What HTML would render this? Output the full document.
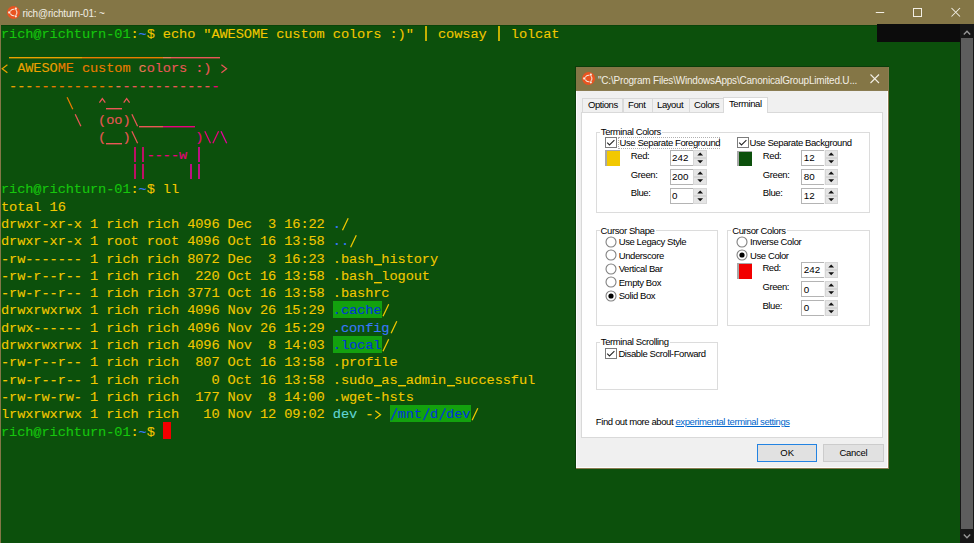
<!DOCTYPE html>
<html><head><meta charset="utf-8"><style>
*{margin:0;padding:0;box-sizing:border-box}
html,body{width:974px;height:543px;overflow:hidden;background:#0C500C;position:relative}
.ln{position:absolute;left:1.0px;height:17.3px;line-height:17.3px;white-space:pre;font-family:"Liberation Mono",monospace;font-size:13.7px;letter-spacing:-0.1213px;color:#F2C800;-webkit-text-stroke:0.1px}
.bgc{position:absolute;height:17.3px}
.us{position:relative;top:1px}
.sl{position:absolute;left:0;stroke-width:1.25;fill:none}
.ubar{position:absolute;height:1px}
.bar{position:absolute;width:2px;height:14.5px;opacity:0.8}
#title{position:absolute;left:0;top:0;width:974px;height:26px;background:#847646;border-bottom:1px solid #0a440a}
#lb{position:absolute;left:0;top:24px;width:1px;height:519px;background:#847646}
.dt{position:absolute;font-family:"Liberation Sans",sans-serif;white-space:pre;line-height:1.15}
#ttext{position:absolute;left:22.5px;top:5px;font-family:"Liberation Sans",sans-serif;font-size:11.5px;color:#f4f0e6;white-space:pre}
</style></head><body>
<div id="title"></div>
<div id="lb"></div>
<svg style="position:absolute;left:5.6px;top:4.5px" width="16" height="16" viewBox="0 0 16 16"><circle cx="7.60" cy="7.50" r="6.50" fill="#E95420"/><circle cx="7.60" cy="7.50" r="3.30" fill="none" stroke="#f3ece0" stroke-width="1.05"/><circle cx="3.20" cy="7.50" r="1.75" fill="#E95420"/><circle cx="9.80" cy="3.69" r="1.75" fill="#E95420"/><circle cx="9.80" cy="11.31" r="1.75" fill="#E95420"/><circle cx="3.20" cy="7.50" r="1.15" fill="#f3ece0"/><circle cx="9.80" cy="3.69" r="1.15" fill="#f3ece0"/><circle cx="9.80" cy="11.31" r="1.15" fill="#f3ece0"/></svg>
<div class="dt" style="left:22.5px;top:7.95px;font-size:10px;letter-spacing:-0.17px;color:#f2eee4">rich@richturn-01: ~</div>
<div class="bar" style="left:425px;top:26.00px;background:#F2C800"></div><div class="bar" style="left:498px;top:26.00px;background:#F2C800"></div><div class="ln" style="top:25.60px"><span style="color:#16C60C">rich@richturn-01</span><span style="color:#F2C800">:</span><span style="color:#3B78FF">~</span><span style="color:#F2C800">$ </span><span style="color:#F2C800">echo &quot;AWESOME custom colors :)&quot;   cowsay   lolcat</span></div>
<div class="ubar" style="left:9.10px;top:57px;width:72.90px;background:#eaa100;box-shadow:0 1px 0 rgba(234,161,0,0.4)"></div><div class="ubar" style="left:82.00px;top:57px;width:81.00px;background:#ea7c00;box-shadow:0 1px 0 rgba(234,124,0,0.4)"></div><div class="ubar" style="left:163.00px;top:57px;width:8.10px;background:#ea7c57;box-shadow:0 1px 0 rgba(234,124,87,0.4)"></div><div class="ubar" style="left:171.10px;top:57px;width:48.60px;background:#ea5757;box-shadow:0 1px 0 rgba(234,87,87,0.4)"></div><div class="ln" style="top:42.90px"><span style="color:#c5a100"> </span><span style="color:#eaa100">         </span><span style="color:#ea7c00">          </span><span style="color:#ea7c57"> </span><span style="color:#ea5757">      </span></div>
<svg class="sl" style="top:58.90px" width="974" height="18"><path d="M7.40 5.8 L2.20 9.75 L7.40 13.7" stroke="#eaa100"/><path d="M221.40 5.8 L226.60 9.75 L221.40 13.7" stroke="#ea5757"/></svg><div class="ln" style="top:60.20px"><span style="color:#eaa100">  AWESO</span><span style="color:#ea7c00">ME custom </span><span style="color:#ea7c57">c</span><span style="color:#ea5757">olors :)  </span></div>
<div class="ln" style="top:77.50px"><span style="color:#eaa100"> ---</span><span style="color:#ea7c00">----------</span><span style="color:#ea7c57">-</span><span style="color:#ea5757">-----------</span><span style="color:#ea007c">-</span></div>
<div class="ubar" style="left:106.30px;top:108px;width:16.20px;background:#ea5757;box-shadow:0 1px 0 rgba(234,87,87,0.4)"></div><svg class="sl" style="top:93.50px" width="974" height="18"><path d="M67.10 3.30 L72.80 15.30" stroke="#ea7c00"/><path d="M99.40 8.7 L102.35 4.6 L105.30 8.7" stroke="#ea5757"/><path d="M123.70 8.7 L126.65 4.6 L129.60 8.7" stroke="#ea5757"/></svg><div class="ln" style="top:94.80px"><span style="color:#eaa100"> </span><span style="color:#ea7c00">          </span><span style="color:#ea7c57"> </span><span style="color:#ea5757">    </span></div>
<div class="ubar" style="left:138.70px;top:126px;width:24.30px;background:#ea5757;box-shadow:0 1px 0 rgba(234,87,87,0.4)"></div><div class="ubar" style="left:163.00px;top:126px;width:32.40px;background:#ea007c;box-shadow:0 1px 0 rgba(234,0,124,0.4)"></div><svg class="sl" style="top:110.80px" width="974" height="18"><path d="M75.20 3.30 L80.90 15.30" stroke="#ea5757"/><path d="M131.90 3.30 L137.60 15.30" stroke="#ea5757"/></svg><div class="ln" style="top:112.10px"><span style="color:#ea7c00">        </span><span style="color:#ea7c57"> </span><span style="color:#ea5757">   (oo)    </span><span style="color:#ea007c">    </span></div>
<div class="ubar" style="left:106.30px;top:143px;width:16.20px;background:#ea5757;box-shadow:0 1px 0 rgba(234,87,87,0.4)"></div><svg class="sl" style="top:128.10px" width="974" height="18"><path d="M131.90 3.30 L137.60 15.30" stroke="#ea5757"/><path d="M204.80 3.30 L210.50 15.30" stroke="#ea007c"/><path d="M218.60 3.30 L212.90 15.30" stroke="#ea007c"/><path d="M221.00 3.30 L226.70 15.30" stroke="#ea00a1"/></svg><div class="ln" style="top:129.40px"><span style="color:#ea7c00">     </span><span style="color:#ea7c57"> </span><span style="color:#ea5757">      (  ) </span><span style="color:#ea007c">       )  </span><span style="color:#ea00a1"> </span></div>
<div class="bar" style="left:134px;top:147.10px;background:#ea007c"></div><div class="bar" style="left:142px;top:147.10px;background:#ea007c"></div><div class="bar" style="left:198px;top:147.10px;background:#ea00a1"></div><div class="ln" style="top:146.70px"><span style="color:#ea7c00">  </span><span style="color:#ea7c57"> </span><span style="color:#ea5757">           </span><span style="color:#ea007c">    ----w </span><span style="color:#ea00a1"> </span></div>
<div class="bar" style="left:134px;top:164.40px;background:#ea007c"></div><div class="bar" style="left:142px;top:164.40px;background:#ea007c"></div><div class="bar" style="left:190px;top:164.40px;background:#ea00a1"></div><div class="bar" style="left:198px;top:164.40px;background:#ea00a1"></div><div class="ln" style="top:164.00px"><span style="color:#ea5757">           </span><span style="color:#ea007c">          </span><span style="color:#ea00a1">    </span></div>
<div class="ln" style="top:181.30px"><span style="color:#16C60C">rich@richturn-01</span><span style="color:#F2C800">:</span><span style="color:#3B78FF">~</span><span style="color:#F2C800">$ </span><span style="color:#F2C800">ll</span></div>
<div class="ln" style="top:198.60px"><span style="color:#F2C800">total 16</span></div>
<svg class="sl" style="top:214.60px" width="974" height="18"><path d="M348.20 3.30 L342.50 15.30" stroke="#F2C800"/></svg><div class="ln" style="top:215.90px"><span style="color:#F2C800">drwxr-xr-x 1 rich rich 4096 Dec  3 16:22 </span><span style="color:#3B78FF">.</span><span style="color:#F2C800"> </span></div>
<svg class="sl" style="top:231.90px" width="974" height="18"><path d="M356.30 3.30 L350.60 15.30" stroke="#F2C800"/></svg><div class="ln" style="top:233.20px"><span style="color:#F2C800">drwxr-xr-x 1 root root 4096 Oct 16 13:58 </span><span style="color:#3B78FF">..</span><span style="color:#F2C800"> </span></div>
<div class="ubar" style="left:373.60px;top:264px;width:8.10px;background:#F2C800;box-shadow:0 1px 0 rgba(242,200,0,0.4)"></div><div class="ln" style="top:250.50px"><span style="color:#F2C800">-rw------- 1 rich rich 8072 Dec  3 16:23 </span><span style="color:#F2C800">.bash history</span></div>
<div class="ubar" style="left:373.60px;top:282px;width:8.10px;background:#F2C800;box-shadow:0 1px 0 rgba(242,200,0,0.4)"></div><div class="ln" style="top:267.80px"><span style="color:#F2C800">-rw-r--r-- 1 rich rich  220 Oct 16 13:58 </span><span style="color:#F2C800">.bash logout</span></div>
<div class="ln" style="top:285.10px"><span style="color:#F2C800">-rw-r--r-- 1 rich rich 3771 Oct 16 13:58 </span><span style="color:#F2C800">.bashrc</span></div>
<div class="bgc" style="left:333.10px;top:301.10px;width:48.60px;background:#13A10E"></div><svg class="sl" style="top:301.10px" width="974" height="18"><path d="M388.70 3.30 L383.00 15.30" stroke="#F2C800"/></svg><div class="ln" style="top:302.40px"><span style="color:#F2C800">drwxrwxrwx 1 rich rich 4096 Nov 26 15:29 </span><span style="color:#0037DA">.cache</span><span style="color:#F2C800"> </span></div>
<svg class="sl" style="top:318.40px" width="974" height="18"><path d="M396.80 3.30 L391.10 15.30" stroke="#F2C800"/></svg><div class="ln" style="top:319.70px"><span style="color:#F2C800">drwx------ 1 rich rich 4096 Nov 26 15:29 </span><span style="color:#3B78FF">.config</span><span style="color:#F2C800"> </span></div>
<div class="bgc" style="left:333.10px;top:335.70px;width:48.60px;background:#13A10E"></div><svg class="sl" style="top:335.70px" width="974" height="18"><path d="M388.70 3.30 L383.00 15.30" stroke="#F2C800"/></svg><div class="ln" style="top:337.00px"><span style="color:#F2C800">drwxrwxrwx 1 rich rich 4096 Nov  8 14:03 </span><span style="color:#0037DA">.local</span><span style="color:#F2C800"> </span></div>
<div class="ln" style="top:354.30px"><span style="color:#F2C800">-rw-r--r-- 1 rich rich  807 Oct 16 13:58 </span><span style="color:#F2C800">.profile</span></div>
<div class="ubar" style="left:373.60px;top:385px;width:8.10px;background:#F2C800;box-shadow:0 1px 0 rgba(242,200,0,0.4)"></div><div class="ubar" style="left:397.90px;top:385px;width:8.10px;background:#F2C800;box-shadow:0 1px 0 rgba(242,200,0,0.4)"></div><div class="ubar" style="left:446.50px;top:385px;width:8.10px;background:#F2C800;box-shadow:0 1px 0 rgba(242,200,0,0.4)"></div><div class="ln" style="top:371.60px"><span style="color:#F2C800">-rw-r--r-- 1 rich rich    0 Oct 16 13:58 </span><span style="color:#F2C800">.sudo as admin successful</span></div>
<div class="ln" style="top:388.90px"><span style="color:#F2C800">-rw-rw-rw- 1 rich rich  177 Nov  8 14:00 </span><span style="color:#F2C800">.wget-hsts</span></div>
<div class="bgc" style="left:389.80px;top:404.90px;width:81.00px;background:#13A10E"></div><svg class="sl" style="top:404.90px" width="974" height="18"><path d="M375.30 5.8 L380.50 9.75 L375.30 13.7" stroke="#F2C800"/><path d="M396.80 3.30 L391.10 15.30" stroke="#0037DA"/><path d="M429.20 3.30 L423.50 15.30" stroke="#0037DA"/><path d="M445.40 3.30 L439.70 15.30" stroke="#0037DA"/><path d="M477.80 3.30 L472.10 15.30" stroke="#F2C800"/></svg><div class="ln" style="top:406.20px"><span style="color:#F2C800">lrwxrwxrwx 1 rich rich   10 Nov 12 09:02 </span><span style="color:#61D6D6">dev</span><span style="color:#F2C800"> -  </span><span style="color:#0037DA"> mnt d dev</span><span style="color:#F2C800"> </span></div>
<div class="ln" style="top:423.50px"><span style="color:#16C60C">rich@richturn-01</span><span style="color:#F2C800">:</span><span style="color:#3B78FF">~</span><span style="color:#F2C800">$ </span></div>
<div class="bgc" style="left:163.00px;top:422.20px;width:8.10px;background:#F20000"></div>
<div style="position:absolute;left:877px;top:24.4px;width:83px;height:17.3px;background:#0c0c0c"></div>
<div style="position:absolute;left:960px;top:24.4px;width:14px;height:519px;background:#171717"></div>
<div style="position:absolute;left:961px;top:38px;width:12px;height:490.5px;background:#5d5d5d"></div>
<svg style="position:absolute;left:860px;top:0" width="114" height="25">
<path d="M15.8 12.5 H24.2" stroke="#f2eee4" stroke-width="1"/>
<rect x="53.5" y="8.5" width="8" height="8" fill="none" stroke="#f2eee4" stroke-width="1"/>
<path d="M91.5 8 L100 16.5 M100 8 L91.5 16.5" stroke="#f2eee4" stroke-width="1.05"/>
</svg>
<svg style="position:absolute;left:960px;top:24px" width="14" height="519">
<path d="M3.8 10.5 L7 7.2 L10.2 10.5" fill="none" stroke="#9a9a9a" stroke-width="1.3"/>
<path d="M3.8 510.5 L7 513.8 L10.2 510.5" fill="none" stroke="#9a9a9a" stroke-width="1.3"/>
</svg>
<div style="position:absolute;left:575.0px;top:66.0px;width:1.0px;height:403.0px;background:#0a3c0a"></div>
<div style="position:absolute;left:575.0px;top:66.0px;width:314.0px;height:1.0px;background:#0a3c0a"></div>
<div style="position:absolute;left:576.0px;top:67.0px;width:313.0px;height:402.0px;background:#8a7c52"></div>
<div style="position:absolute;left:576.0px;top:67.0px;width:312.0px;height:23.0px;background:#847646"></div>
<div style="position:absolute;left:576.0px;top:90.6px;width:312.0px;height:377.4px;background:#f0f0f0;border-left:1px solid #fbfbfb;border-right:1px solid #fdfdfd;border-bottom:1px solid #fdfdfd"></div>
<svg style="position:absolute;left:581px;top:71px" width="16" height="16" viewBox="0 0 16 16"><circle cx="7.60" cy="7.50" r="6.50" fill="#E95420"/><circle cx="7.60" cy="7.50" r="3.30" fill="none" stroke="#f3ece0" stroke-width="1.05"/><circle cx="3.20" cy="7.50" r="1.75" fill="#E95420"/><circle cx="9.80" cy="3.69" r="1.75" fill="#E95420"/><circle cx="9.80" cy="11.31" r="1.75" fill="#E95420"/><circle cx="3.20" cy="7.50" r="1.15" fill="#f3ece0"/><circle cx="9.80" cy="3.69" r="1.15" fill="#f3ece0"/><circle cx="9.80" cy="11.31" r="1.15" fill="#f3ece0"/></svg>
<div class="dt" style="left:598.0px;top:74.5px;font-size:10.00px;letter-spacing:-0.20px;color:#f2eee4;">"C:\Program Files\WindowsApps\CanonicalGroupLimited.U...</div>
<svg style="position:absolute;left:869px;top:73px" width="12" height="12"><path d="M1.5 1.5 L10 10 M10 1.5 L1.5 10" stroke="#f2eee4" stroke-width="1.1"/></svg>
<div style="position:absolute;left:582.4px;top:98.0px;width:41.1px;height:14.0px;background:#f0f0f0;border:1px solid #d9d9d9;border-bottom:none"></div>
<div class="dt" style="left:587.9px;top:99.5px;font-size:9.50px;letter-spacing:-0.40px;color:#000;">Options</div>
<div style="position:absolute;left:622.5px;top:98.0px;width:30.0px;height:14.0px;background:#f0f0f0;border:1px solid #d9d9d9;border-bottom:none"></div>
<div class="dt" style="left:628.0px;top:99.5px;font-size:9.50px;letter-spacing:-0.40px;color:#000;">Font</div>
<div style="position:absolute;left:651.5px;top:98.0px;width:38.1px;height:14.0px;background:#f0f0f0;border:1px solid #d9d9d9;border-bottom:none"></div>
<div class="dt" style="left:657.0px;top:99.5px;font-size:9.50px;letter-spacing:-0.40px;color:#000;">Layout</div>
<div style="position:absolute;left:688.6px;top:98.0px;width:35.0px;height:14.0px;background:#f0f0f0;border:1px solid #d9d9d9;border-bottom:none"></div>
<div class="dt" style="left:694.1px;top:99.5px;font-size:9.50px;letter-spacing:-0.40px;color:#000;">Colors</div>
<div style="position:absolute;left:581.0px;top:111.5px;width:302.0px;height:326.0px;background:#fff;border:1px solid #d9d9d9"></div>
<div style="position:absolute;left:722.6px;top:96.8px;width:45.5px;height:16.0px;background:#fff;border:1px solid #d9d9d9;border-bottom:none"></div>
<div class="dt" style="left:729.0px;top:98.5px;font-size:9.50px;letter-spacing:-0.40px;color:#000;">Terminal</div>
<div style="position:absolute;left:595.8px;top:131.6px;width:274.3px;height:81.5px;border:1px solid #dcdcdc"></div>
<div style="position:absolute;left:599.8px;top:130.6px;width:62.5px;height:3.0px;background:#fff"></div>
<div class="dt" style="left:600.8px;top:126.5px;font-size:9.50px;letter-spacing:-0.40px;color:#000;">Terminal Colors</div>
<svg style="position:absolute;left:605.0px;top:137.0px" width="12" height="12"><rect x="0.5" y="0.5" width="11" height="10" fill="#fff" stroke="#7c7c7c" stroke-width="1"/><path d="M2.2 5.6 L4.5 7.9 L9.4 3.2" fill="none" stroke="#262626" stroke-width="1.1"/></svg>
<div style="position:absolute;left:618.2px;top:137.2px;width:101.5px;height:11.5px;border:1px dotted #b0b0b0"></div>
<div class="dt" style="left:619.5px;top:138.0px;font-size:9.50px;letter-spacing:-0.40px;color:#000;">Use Separate Foreground</div>
<svg style="position:absolute;left:737.0px;top:137.2px" width="12" height="12"><rect x="0.5" y="0.5" width="11" height="10" fill="#fff" stroke="#7c7c7c" stroke-width="1"/><path d="M2.2 5.6 L4.5 7.9 L9.4 3.2" fill="none" stroke="#262626" stroke-width="1.1"/></svg>
<div class="dt" style="left:749.5px;top:138.0px;font-size:9.50px;letter-spacing:-0.40px;color:#000;">Use Separate Background</div>
<div style="position:absolute;left:605.2px;top:150.2px;width:15.0px;height:16.2px;background:#F2C800;border-left:2px solid #a8a8a8;border-top:1px solid #a8a8a8"></div>
<div style="position:absolute;left:737.0px;top:150.6px;width:14.5px;height:15.6px;background:#0C500C;border-left:2px solid #a8a8a8;border-top:1px solid #a8a8a8"></div>
<div class="dt" style="left:630.8px;top:150.6px;font-size:9.50px;letter-spacing:-0.40px;color:#000;">Red:</div>
<div class="dt" style="left:762.8px;top:150.6px;font-size:9.50px;letter-spacing:-0.40px;color:#000;">Red:</div>
<div style="position:absolute;left:669.5px;top:149.8px;width:23.5px;height:16.0px;background:#fff;border:1px solid #b4b4b4;border-right:none"></div>
<div class="dt" style="left:672.0px;top:152.1px;font-size:9.80px;letter-spacing:0.00px;color:#000;">242</div>
<div style="position:absolute;left:692.5px;top:149.8px;width:14.0px;height:16.0px;background:#f4f4f4"></div>
<div style="position:absolute;left:693.0px;top:149.8px;width:13.5px;height:8.0px;background:#e5e5e5;border:1px solid #d6d6d6"></div>
<div style="position:absolute;left:693.0px;top:157.8px;width:13.5px;height:8.0px;background:#e5e5e5;border:1px solid #d6d6d6"></div>
<svg style="position:absolute;left:692.5px;top:149.8px" width="14" height="16"><path d="M4.3 5.6 L7.2 2.6 L10.1 5.6 Z M4.3 10.2 L7.2 13.2 L10.1 10.2 Z" fill="#111"/></svg>
<div style="position:absolute;left:801.3px;top:149.8px;width:23.5px;height:16.0px;background:#fff;border:1px solid #b4b4b4;border-right:none"></div>
<div class="dt" style="left:803.8px;top:152.1px;font-size:9.80px;letter-spacing:0.00px;color:#000;">12</div>
<div style="position:absolute;left:824.3px;top:149.8px;width:14.0px;height:16.0px;background:#f4f4f4"></div>
<div style="position:absolute;left:824.8px;top:149.8px;width:13.5px;height:8.0px;background:#e5e5e5;border:1px solid #d6d6d6"></div>
<div style="position:absolute;left:824.8px;top:157.8px;width:13.5px;height:8.0px;background:#e5e5e5;border:1px solid #d6d6d6"></div>
<svg style="position:absolute;left:824.3px;top:149.8px" width="14" height="16"><path d="M4.3 5.6 L7.2 2.6 L10.1 5.6 Z M4.3 10.2 L7.2 13.2 L10.1 10.2 Z" fill="#111"/></svg>
<div class="dt" style="left:630.8px;top:169.6px;font-size:9.50px;letter-spacing:-0.40px;color:#000;">Green:</div>
<div class="dt" style="left:762.8px;top:169.6px;font-size:9.50px;letter-spacing:-0.40px;color:#000;">Green:</div>
<div style="position:absolute;left:669.5px;top:168.8px;width:23.5px;height:16.0px;background:#fff;border:1px solid #b4b4b4;border-right:none"></div>
<div class="dt" style="left:672.0px;top:171.1px;font-size:9.80px;letter-spacing:0.00px;color:#000;">200</div>
<div style="position:absolute;left:692.5px;top:168.8px;width:14.0px;height:16.0px;background:#f4f4f4"></div>
<div style="position:absolute;left:693.0px;top:168.8px;width:13.5px;height:8.0px;background:#e5e5e5;border:1px solid #d6d6d6"></div>
<div style="position:absolute;left:693.0px;top:176.8px;width:13.5px;height:8.0px;background:#e5e5e5;border:1px solid #d6d6d6"></div>
<svg style="position:absolute;left:692.5px;top:168.8px" width="14" height="16"><path d="M4.3 5.6 L7.2 2.6 L10.1 5.6 Z M4.3 10.2 L7.2 13.2 L10.1 10.2 Z" fill="#111"/></svg>
<div style="position:absolute;left:801.3px;top:168.8px;width:23.5px;height:16.0px;background:#fff;border:1px solid #b4b4b4;border-right:none"></div>
<div class="dt" style="left:803.8px;top:171.1px;font-size:9.80px;letter-spacing:0.00px;color:#000;">80</div>
<div style="position:absolute;left:824.3px;top:168.8px;width:14.0px;height:16.0px;background:#f4f4f4"></div>
<div style="position:absolute;left:824.8px;top:168.8px;width:13.5px;height:8.0px;background:#e5e5e5;border:1px solid #d6d6d6"></div>
<div style="position:absolute;left:824.8px;top:176.8px;width:13.5px;height:8.0px;background:#e5e5e5;border:1px solid #d6d6d6"></div>
<svg style="position:absolute;left:824.3px;top:168.8px" width="14" height="16"><path d="M4.3 5.6 L7.2 2.6 L10.1 5.6 Z M4.3 10.2 L7.2 13.2 L10.1 10.2 Z" fill="#111"/></svg>
<div class="dt" style="left:630.8px;top:188.4px;font-size:9.50px;letter-spacing:-0.40px;color:#000;">Blue:</div>
<div class="dt" style="left:762.8px;top:188.4px;font-size:9.50px;letter-spacing:-0.40px;color:#000;">Blue:</div>
<div style="position:absolute;left:669.5px;top:187.6px;width:23.5px;height:16.0px;background:#fff;border:1px solid #b4b4b4;border-right:none"></div>
<div class="dt" style="left:672.0px;top:189.9px;font-size:9.80px;letter-spacing:0.00px;color:#000;">0</div>
<div style="position:absolute;left:692.5px;top:187.6px;width:14.0px;height:16.0px;background:#f4f4f4"></div>
<div style="position:absolute;left:693.0px;top:187.6px;width:13.5px;height:8.0px;background:#e5e5e5;border:1px solid #d6d6d6"></div>
<div style="position:absolute;left:693.0px;top:195.6px;width:13.5px;height:8.0px;background:#e5e5e5;border:1px solid #d6d6d6"></div>
<svg style="position:absolute;left:692.5px;top:187.6px" width="14" height="16"><path d="M4.3 5.6 L7.2 2.6 L10.1 5.6 Z M4.3 10.2 L7.2 13.2 L10.1 10.2 Z" fill="#111"/></svg>
<div style="position:absolute;left:801.3px;top:187.6px;width:23.5px;height:16.0px;background:#fff;border:1px solid #b4b4b4;border-right:none"></div>
<div class="dt" style="left:803.8px;top:189.9px;font-size:9.80px;letter-spacing:0.00px;color:#000;">12</div>
<div style="position:absolute;left:824.3px;top:187.6px;width:14.0px;height:16.0px;background:#f4f4f4"></div>
<div style="position:absolute;left:824.8px;top:187.6px;width:13.5px;height:8.0px;background:#e5e5e5;border:1px solid #d6d6d6"></div>
<div style="position:absolute;left:824.8px;top:195.6px;width:13.5px;height:8.0px;background:#e5e5e5;border:1px solid #d6d6d6"></div>
<svg style="position:absolute;left:824.3px;top:187.6px" width="14" height="16"><path d="M4.3 5.6 L7.2 2.6 L10.1 5.6 Z M4.3 10.2 L7.2 13.2 L10.1 10.2 Z" fill="#111"/></svg>
<div style="position:absolute;left:595.5px;top:230.0px;width:122.9px;height:95.7px;border:1px solid #dcdcdc"></div>
<div style="position:absolute;left:599.6px;top:229.0px;width:56.0px;height:3.0px;background:#fff"></div>
<div class="dt" style="left:600.6px;top:225.5px;font-size:9.50px;letter-spacing:-0.40px;color:#000;">Cursor Shape</div>
<svg style="position:absolute;left:604.8px;top:235.6px" width="12" height="12"><circle cx="6" cy="6" r="5" fill="#fff" stroke="#808080" stroke-width="1.1"/></svg>
<div class="dt" style="left:618.7px;top:237.2px;font-size:9.50px;letter-spacing:-0.40px;color:#000;">Use Legacy Style</div>
<svg style="position:absolute;left:604.8px;top:249.1px" width="12" height="12"><circle cx="6" cy="6" r="5" fill="#fff" stroke="#808080" stroke-width="1.1"/></svg>
<div class="dt" style="left:618.7px;top:250.7px;font-size:9.50px;letter-spacing:-0.40px;color:#000;">Underscore</div>
<svg style="position:absolute;left:604.8px;top:262.5px" width="12" height="12"><circle cx="6" cy="6" r="5" fill="#fff" stroke="#808080" stroke-width="1.1"/></svg>
<div class="dt" style="left:618.7px;top:264.1px;font-size:9.50px;letter-spacing:-0.40px;color:#000;">Vertical Bar</div>
<svg style="position:absolute;left:604.8px;top:276.0px" width="12" height="12"><circle cx="6" cy="6" r="5" fill="#fff" stroke="#808080" stroke-width="1.1"/></svg>
<div class="dt" style="left:618.7px;top:277.6px;font-size:9.50px;letter-spacing:-0.40px;color:#000;">Empty Box</div>
<svg style="position:absolute;left:604.8px;top:289.5px" width="12" height="12"><circle cx="6" cy="6" r="5" fill="#fff" stroke="#808080" stroke-width="1.1"/><circle cx="6" cy="6" r="2.6" fill="#000"/></svg>
<div class="dt" style="left:618.7px;top:291.1px;font-size:9.50px;letter-spacing:-0.40px;color:#000;">Solid Box</div>
<div style="position:absolute;left:727.3px;top:230.0px;width:142.9px;height:95.8px;border:1px solid #dcdcdc"></div>
<div style="position:absolute;left:731.2px;top:229.0px;width:55.5px;height:3.0px;background:#fff"></div>
<div class="dt" style="left:732.2px;top:225.5px;font-size:9.50px;letter-spacing:-0.40px;color:#000;">Cursor Colors</div>
<svg style="position:absolute;left:736.2px;top:235.8px" width="12" height="12"><circle cx="6" cy="6" r="5" fill="#fff" stroke="#808080" stroke-width="1.1"/></svg>
<div class="dt" style="left:750.0px;top:237.1px;font-size:9.50px;letter-spacing:-0.40px;color:#000;">Inverse Color</div>
<svg style="position:absolute;left:736.2px;top:249.2px" width="12" height="12"><circle cx="6" cy="6" r="5" fill="#fff" stroke="#808080" stroke-width="1.1"/><circle cx="6" cy="6" r="2.6" fill="#000"/></svg>
<div class="dt" style="left:750.0px;top:250.5px;font-size:9.50px;letter-spacing:-0.40px;color:#000;">Use Color</div>
<div style="position:absolute;left:737.2px;top:262.5px;width:14.5px;height:16.5px;background:#F20000;border-left:2px solid #a8a8a8;border-top:1px solid #a8a8a8"></div>
<div class="dt" style="left:762.4px;top:262.8px;font-size:9.50px;letter-spacing:-0.40px;color:#000;">Red:</div>
<div style="position:absolute;left:801.3px;top:262.0px;width:23.5px;height:16.0px;background:#fff;border:1px solid #b4b4b4;border-right:none"></div>
<div class="dt" style="left:803.8px;top:264.3px;font-size:9.80px;letter-spacing:0.00px;color:#000;">242</div>
<div style="position:absolute;left:824.3px;top:262.0px;width:14.0px;height:16.0px;background:#f4f4f4"></div>
<div style="position:absolute;left:824.8px;top:262.0px;width:13.5px;height:8.0px;background:#e5e5e5;border:1px solid #d6d6d6"></div>
<div style="position:absolute;left:824.8px;top:270.0px;width:13.5px;height:8.0px;background:#e5e5e5;border:1px solid #d6d6d6"></div>
<svg style="position:absolute;left:824.3px;top:262.0px" width="14" height="16"><path d="M4.3 5.6 L7.2 2.6 L10.1 5.6 Z M4.3 10.2 L7.2 13.2 L10.1 10.2 Z" fill="#111"/></svg>
<div class="dt" style="left:762.4px;top:282.0px;font-size:9.50px;letter-spacing:-0.40px;color:#000;">Green:</div>
<div style="position:absolute;left:801.3px;top:281.2px;width:23.5px;height:16.0px;background:#fff;border:1px solid #b4b4b4;border-right:none"></div>
<div class="dt" style="left:803.8px;top:283.5px;font-size:9.80px;letter-spacing:0.00px;color:#000;">0</div>
<div style="position:absolute;left:824.3px;top:281.2px;width:14.0px;height:16.0px;background:#f4f4f4"></div>
<div style="position:absolute;left:824.8px;top:281.2px;width:13.5px;height:8.0px;background:#e5e5e5;border:1px solid #d6d6d6"></div>
<div style="position:absolute;left:824.8px;top:289.2px;width:13.5px;height:8.0px;background:#e5e5e5;border:1px solid #d6d6d6"></div>
<svg style="position:absolute;left:824.3px;top:281.2px" width="14" height="16"><path d="M4.3 5.6 L7.2 2.6 L10.1 5.6 Z M4.3 10.2 L7.2 13.2 L10.1 10.2 Z" fill="#111"/></svg>
<div class="dt" style="left:762.4px;top:300.8px;font-size:9.50px;letter-spacing:-0.40px;color:#000;">Blue:</div>
<div style="position:absolute;left:801.3px;top:300.0px;width:23.5px;height:16.0px;background:#fff;border:1px solid #b4b4b4;border-right:none"></div>
<div class="dt" style="left:803.8px;top:302.3px;font-size:9.80px;letter-spacing:0.00px;color:#000;">0</div>
<div style="position:absolute;left:824.3px;top:300.0px;width:14.0px;height:16.0px;background:#f4f4f4"></div>
<div style="position:absolute;left:824.8px;top:300.0px;width:13.5px;height:8.0px;background:#e5e5e5;border:1px solid #d6d6d6"></div>
<div style="position:absolute;left:824.8px;top:308.0px;width:13.5px;height:8.0px;background:#e5e5e5;border:1px solid #d6d6d6"></div>
<svg style="position:absolute;left:824.3px;top:300.0px" width="14" height="16"><path d="M4.3 5.6 L7.2 2.6 L10.1 5.6 Z M4.3 10.2 L7.2 13.2 L10.1 10.2 Z" fill="#111"/></svg>
<div style="position:absolute;left:595.6px;top:341.7px;width:122.5px;height:48.7px;border:1px solid #dcdcdc"></div>
<div style="position:absolute;left:599.8px;top:340.7px;width:70.0px;height:3.0px;background:#fff"></div>
<div class="dt" style="left:600.8px;top:337.0px;font-size:9.50px;letter-spacing:-0.40px;color:#000;">Terminal Scrolling</div>
<svg style="position:absolute;left:605.0px;top:348.0px" width="12" height="12"><rect x="0.5" y="0.5" width="11" height="10" fill="#fff" stroke="#7c7c7c" stroke-width="1"/><path d="M2.2 5.6 L4.5 7.9 L9.4 3.2" fill="none" stroke="#262626" stroke-width="1.1"/></svg>
<div class="dt" style="left:618.4px;top:349.0px;font-size:9.50px;letter-spacing:-0.40px;color:#000;">Disable Scroll-Forward</div>
<div class="dt" style="left:595.8px;top:417.0px;font-size:9.50px;letter-spacing:-0.40px;color:#000;">Find out more about <span style="color:#0066cc;text-decoration:underline">experimental terminal settings</span></div>
<div style="position:absolute;left:757.2px;top:444.3px;width:60.0px;height:17.5px;background:#e1e1e1;border:1.5px solid #2383e2"></div>
<div class="dt" style="left:757.2px;top:447.5px;font-size:9.50px;letter-spacing:0.00px;color:#000;width:60px;text-align:center">OK</div>
<div style="position:absolute;left:823.1px;top:444.3px;width:60.5px;height:17.5px;background:#e1e1e1;border:1px solid #cccccc"></div>
<div class="dt" style="left:823.1px;top:447.5px;font-size:9.50px;letter-spacing:-0.30px;color:#000;width:60.5px;text-align:center">Cancel</div>
</body></html>
